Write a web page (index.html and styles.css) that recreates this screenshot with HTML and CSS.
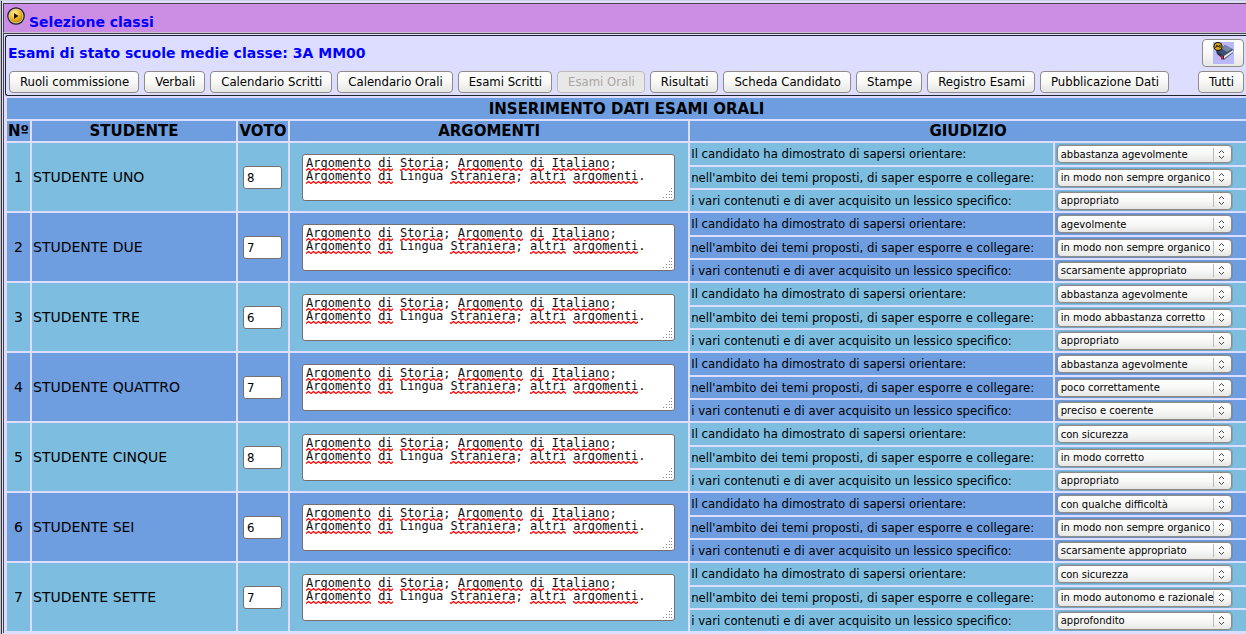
FILE: index.html
```html
<!DOCTYPE html>
<html lang="it">
<head>
<meta charset="utf-8">
<title>Esami di stato - Inserimento dati esami orali</title>
<link rel="stylesheet" href="styles.css">
<script src="rows.js" defer></script>
</head>
<body>
<svg class="defs" aria-hidden="true">
  <defs>
    <pattern id="wave" width="5" height="13" patternUnits="userSpaceOnUse">
      <path d="M-1 1.500L0 2.500 2.500.5 5 2.500 6 1.500" fill="none" stroke="#ff0000" stroke-width="1.300"/>
    </pattern>
  </defs>
  <symbol id="squiggles" viewBox="0 0 340 16">
    <path fill="url(#wave)" d="M0 0h65v3H0zM72 0h15v3H72zM94 0h43v3H94zM152 0h65v3h-65zM224 0h14v3h-14zM246 0h57v3h-57zM0 13h65v3H0zM72 13h15v3H72zM144 13h65v3h-65zM224 13h36v3h-36zM267 13h65v3h-65z"/>
  </symbol>
  <symbol id="grip" viewBox="0 0 11 11">
    <path fill="#888" d="M9 0h1v1h-1zM7 3h1v1H7zM9 3h1v1h-1zM4 6h1v1H4zM7 6h1v1H7zM9 6h1v1h-1zM1 9h1v1H1zM4 9h1v1H4zM7 9h1v1H7zM9 9h1v1H9z"/>
  </symbol>
</svg>
<div class="page">
  <header class="classbar">
    <svg class="play" viewBox="0 0 18 18" aria-hidden="true">
      <defs><radialGradient id="gold" cx=".4" cy=".3" r=".8"><stop offset="0" stop-color="#fff3a8"/><stop offset=".45" stop-color="#f6c030"/><stop offset="1" stop-color="#b87800"/></radialGradient></defs>
      <circle cx="9" cy="9" r="8.8" fill="#1c1c26"/>
      <circle cx="9" cy="9" r="7.6" fill="#d8c9a0"/>
      <circle cx="9" cy="9" r="6.6" fill="url(#gold)"/>
      <path d="M7 6v6l4.500-3z" fill="#1b1300"/>
    </svg>
    <a href="#classi">Selezione classi</a>
  </header>
  <main class="frame">
    <section class="panel">
      <div class="heading">
        <h1>Esami di stato scuole medie classe: 3A MM00</h1>
        <button class="btn book" aria-label="Registro">
          <svg viewBox="0 0 21 22" aria-hidden="true">
            <path fill="#b9b9fa" d="M0 0h21v22H0z"/>
            <path d="M3 9l9-6 9 5-10 8z" fill="#3c4f75"/>
            <path d="M8 6l4-3 7 4-5 3z" fill="#7788a5"/>
            <path d="M3 9l8 5v4L4 12z" fill="#27344f"/>
            <path d="M11 14l9-6v2l-9 7z" fill="#e7e5e8"/>
            <path d="M11 16.500l9-6.500v1l-9 7z" fill="#5d687f"/>
            <path d="M8 13l2 1v4l-1-1-1 1z" fill="#d91b24"/>
            <circle cx="5" cy="4.500" r="4.500" fill="#17120a"/><circle cx="5" cy="4.500" r="3.500" fill="#d9a617"/>
            <path d="M2.500 6l1.500-3 1 2 2-2v3" fill="none" stroke="#2c1c00"/>
          </svg>
        </button>
      </div>
      <nav class="tabs">
        <button class="btn">Ruoli commissione</button>
        <button class="btn">Verbali</button>
        <button class="btn">Calendario Scritti</button>
        <button class="btn">Calendario Orali</button>
        <button class="btn">Esami Scritti</button>
        <button class="btn" disabled>Esami Orali</button>
        <button class="btn">Risultati</button>
        <button class="btn">Scheda Candidato</button>
        <button class="btn">Stampe</button>
        <button class="btn">Registro Esami</button>
        <button class="btn">Pubblicazione Dati</button>
        <button class="btn last">Tutti</button>
      </nav>
    </section>
    <div class="sheet">
      <table>
        <colgroup><col class="c-num"><col class="c-name"><col class="c-mark"><col class="c-topics"><col class="c-text"><col></colgroup>
        <thead>
          <tr><th class="title" colspan="6">INSERIMENTO DATI ESAMI ORALI</th></tr>
          <tr><th>Nº</th><th>STUDENTE</th><th>VOTO</th><th>ARGOMENTI</th><th colspan="2">GIUDIZIO</th></tr>
        </thead>
      </table>
    </div>
  </main>
</div>
</body>
</html>
```

FILE: styles.css
```css
* { box-sizing: border-box; }
body {
  margin: 0;
  background: #ddddff;
  color: #000;
  font-family: "DejaVu Sans", sans-serif;
  font-size: 14px;
}
.defs { position: absolute; width: 0; height: 0; }
.page {
  min-height: 100vh;
  padding: 2px 0 0 1px;
  border-left: 1px solid #c4c4c4;
  border-top: 1px solid #d0d0e4;
  box-shadow: inset 1px 0 #33333b;
  overflow: hidden;
}
.classbar {
  display: flex;
  align-items: flex-start;
  gap: 4px;
  height: 30px;
  margin-left: 1px;
  padding: 3px 3px 0;
  border: solid #44404e;
  border-width: 1px 0 0 1px;
  border-bottom: 1px solid #c8c4cc;
  background: #cc8ee4;
}
.play { width: 18px; height: 18px; }
.classbar a {
  padding-top: 6px;
  color: #00f;
  font-weight: bold;
  line-height: 18px;
  text-decoration: none;
}
.frame {
  margin-left: 1px;
  padding: 1px 0 0 1px;
  border: solid #44404e;
  border-width: 1px 0 0 1px;
}
.panel {
  height: 61px;
  padding: 3px 2px 0 2px;
  border: 1px solid #22222a;
  border-right: 0;
  border-radius: 3px 0 0 3px;
}
.heading { display: flex; justify-content: space-between; align-items: flex-start; }
h1 { margin: 5px 0 0; color: #00f; font-size: 14px; line-height: 18px; }
.tabs { display: flex; gap: 5px; margin-top: 4px; padding-left: 1px; }
.btn {
  height: 22px;
  padding: 0 9px 0 10px;
  border: 1px solid #8f8b86;
  border-radius: 4px;
  background: linear-gradient(#fff, #f8f8f7 50%, #e6e6e4);
  color: #000;
  font: 13px/18px "DejaVu Sans Condensed", "DejaVu Sans", sans-serif;
  white-space: nowrap;
}
.btn:disabled { color: #aaa6a2; border-color: #bcb9b8; background: #e9e8e8; }
.last { margin-left: auto; }
.book { width: 42px; height: 28px; }
.book svg { display: block; width: 21px; height: 22px; }

.sheet { overflow: hidden; }
table {
  width: calc(100% + 2px);
  border-spacing: 2px;
  table-layout: fixed;
}
.c-num { width: 23px; }
.c-name { width: 204px; }
.c-mark { width: 50px; }
.c-topics { width: 32.4%; }
.c-text { width: 29.5%; }
th, td { padding: 0; white-space: nowrap; }
th { height: 20px; background: #6e9ee0; font-size: 15px; line-height: 20px; }
.title { height: 21px; padding-top: 1px; }
tbody td { background: #7dbee0; }
tbody:nth-of-type(even) td { background: #6e9ee0; }
tbody tr { height: 21px; }
tbody tr:first-child { height: 22px; }
.num, .mark, .topics { text-align: center; }
.name, .phrase { padding-left: 1px; }
.phrase { font: 13px/16px "DejaVu Sans Condensed", "DejaVu Sans", sans-serif; }
.mark input {
  display: block;
  width: 39px;
  height: 23px;
  margin: 0 auto 0 5px;
  padding: 0 3px;
  border: 1px solid #77706c;
  border-radius: 3px;
  background: #fff;
  font: 13px "DejaVu Sans Condensed", "DejaVu Sans", sans-serif;
}
.box { position: relative; margin: 0 13px 0 12px; }
textarea {
  display: block;
  width: 100%;
  height: 47px;
  padding: 2px 3px;
  border: 1px solid #77706c;
  border-radius: 3px;
  background: #fff;
  color: #111;
  font: 12px/13px "DejaVu Sans Mono", monospace;
  resize: none;
  overflow: hidden;
}
.wavy { position: absolute; left: 4px; top: 14px; width: 340px; height: 16px; pointer-events: none; }
.grip { position: absolute; right: 2px; bottom: 2px; width: 11px; height: 11px; pointer-events: none; }
select {
  display: block;
  width: 175px;
  height: 18px;
  margin-left: 2px;
  padding: 0 17px 0 3px;
  border: 1px solid #8f8b86;
  border-radius: 4px;
  appearance: none;
  background:
    url("data:image/svg+xml,%3Csvg xmlns='http://www.w3.org/2000/svg' width='18' height='13'%3E%3Cpath d='M.5 0v13' stroke='%23bbb'/%3E%3Cpath d='M6 5l2.500-2.500L11 5M6 8l2.500 2.500L11 8' fill='none' stroke='%23444'/%3E%3C/svg%3E") right 0 center no-repeat,
    linear-gradient(#fff, #f8f8f7 50%, #e6e6e4);
  box-shadow: 0 0 0 1px rgba(110, 110, 120, .3);
  color: #000;
  font: 10px "DejaVu Sans", sans-serif;
}
```

FILE: rows.js
```js
const phrases = [
  "Il candidato ha dimostrato di sapersi orientare:",
  "nell'ambito dei temi proposti, di saper esporre e collegare:",
  "i vari contenuti e di aver acquisito un lessico specifico:"
];
const students = [
  ["UNO", 8, "abbastanza agevolmente", "in modo non sempre organico", "appropriato"],
  ["DUE", 7, "agevolmente", "in modo non sempre organico", "scarsamente appropriato"],
  ["TRE", 6, "abbastanza agevolmente", "in modo abbastanza corretto", "appropriato"],
  ["QUATTRO", 7, "abbastanza agevolmente", "poco correttamente", "preciso e coerente"],
  ["CINQUE", 8, "con sicurezza", "in modo corretto", "appropriato"],
  ["SEI", 6, "con qualche difficoltà", "in modo non sempre organico", "scarsamente appropriato"],
  ["SETTE", 7, "con sicurezza", "in modo autonomo e razionale", "approfondito"]
];
const topics = "Argomento di Storia; Argomento di Italiano;\nArgomento di Lingua Straniera; altri argomenti.";

const judgement = (n, i, value) => `
  <td class="phrase"><label for="g${n}-${i}">${phrases[i]}</label></td>
  <td><select id="g${n}-${i}"><option>${value}</option></select></td>`;

const table = document.querySelector("table");
students.forEach(([name, mark, ...values], k) => {
  const n = k + 1;
  const body = document.createElement("tbody");
  body.innerHTML = `
    <tr>
      <td class="num" rowspan="3">${n}</td>
      <td class="name" rowspan="3">STUDENTE ${name}</td>
      <td class="mark" rowspan="3"><input type="text" value="${mark}" aria-label="Voto ${n}"></td>
      <td class="topics" rowspan="3"><div class="box">
        <textarea aria-label="Argomenti ${n}" spellcheck="false">${topics}</textarea>
        <svg class="wavy" aria-hidden="true"><use href="#squiggles"/></svg>
        <svg class="grip" aria-hidden="true"><use href="#grip"/></svg>
      </div></td>${judgement(n, 0, values[0])}
    </tr>
    <tr>${judgement(n, 1, values[1])}</tr>
    <tr>${judgement(n, 2, values[2])}</tr>`;
  table.append(body);
});
```
